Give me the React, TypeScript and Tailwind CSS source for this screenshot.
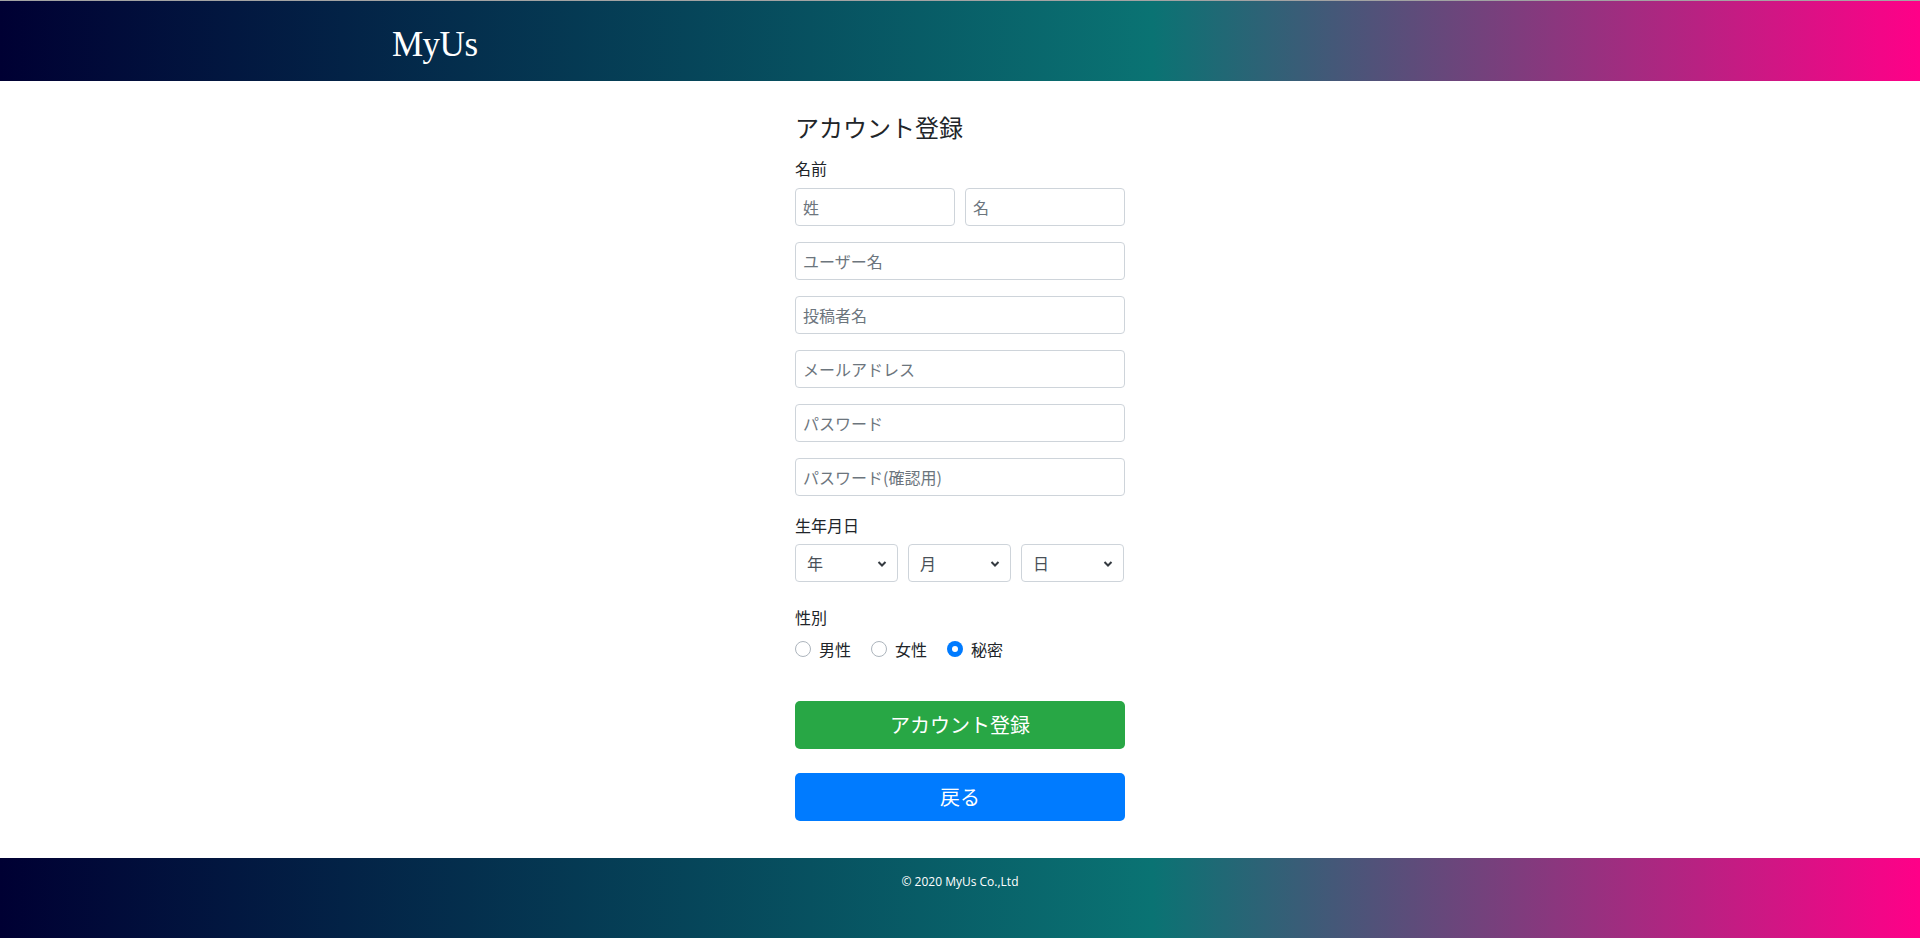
import React, { useState } from 'react';

const jp = { fontFamily: '"Noto Sans CJK JP", "Noto Sans", sans-serif' };
const grad = 'bg-[linear-gradient(to_right,#000033_0%,#0a7373_60%,#ff0088_100%)]';

const inputCls =
    'w-full h-[38px] px-[7px] border border-[#ced4da] rounded-[4px] text-[16px] text-[#495057] placeholder:text-[#6c757d] outline-none bg-white';

const Select: React.FC<{ label: string }> = ({ label }) => (
    <div className="relative w-[103px] h-[38px] border border-[#ced4da] rounded-[4px] bg-white flex items-center pl-[11px] text-[16px] text-[#495057]">
        <span>{label}</span>
        <svg className="absolute right-[10px] top-[15px]" width="10" height="8" viewBox="0 0 10 8">
            <path d="M1.5 2 L5 5.5 L8.5 2" fill="none" stroke="#343a40" strokeWidth="2" />
        </svg>
    </div>
);

const Radio: React.FC<{ label: string; checked: boolean; onClick: () => void }> = ({ label, checked, onClick }) => (
    <label className="flex items-center gap-[8px] mr-[20px] cursor-pointer" onClick={onClick}>
        {checked ? (
            <span className="w-4 h-4 rounded-full bg-[#007bff] flex items-center justify-center">
                <span className="w-[6px] h-[6px] rounded-full bg-white" />
            </span>
        ) : (
            <span className="w-4 h-4 rounded-full border border-[#adb5bd] bg-white" />
        )}
        <span className="text-[16px] leading-6 text-[#212529]">{label}</span>
    </label>
);

export default function App() {
    const [gender, setGender] = useState('secret');

    return (
        <div className="min-h-[938px] flex flex-col bg-white" style={jp}>
            <header className={`h-[81px] border-t border-[#a3a3a3] ${grad}`}>
                <div className="max-w-[1140px] mx-auto pl-[2px] h-full flex items-center">
                    <span className="text-white text-[35px] leading-none pt-[6px] tracking-[-0.5px]" style={{ fontFamily: '"Liberation Serif", serif' }}>
                        MyUs
                    </span>
                </div>
            </header>

            <main className="flex-1 flex justify-center">
                <form className="w-[330px] pt-[31px] pb-[37px]" onSubmit={e => e.preventDefault()}>
                    <h1 className="text-[24px] leading-[29px] text-[#212529] font-normal">アカウント登録</h1>

                    <p className="mt-[15px] text-[16px] leading-6 text-[#212529]">名前</p>
                    <div className="mt-[8px] flex gap-[10px]">
                        <input className={inputCls} placeholder="姓" />
                        <input className={inputCls} placeholder="名" />
                    </div>

                    <div className="mt-4 flex flex-col gap-4">
                        <input className={inputCls} placeholder="ユーザー名" />
                        <input className={inputCls} placeholder="投稿者名" />
                        <input className={inputCls} placeholder="メールアドレス" />
                        <input className={inputCls} type="password" placeholder="パスワード" />
                        <input className={inputCls} type="password" placeholder="パスワード(確認用)" />
                    </div>

                    <p className="mt-[17px] text-[16px] leading-6 text-[#212529]">生年月日</p>
                    <div className="mt-[7px] flex gap-[10px]">
                        <Select label="年" />
                        <Select label="月" />
                        <Select label="日" />
                    </div>

                    <p className="mt-[23px] text-[16px] leading-6 text-[#212529]">性別</p>
                    <div className="mt-[8px] flex">
                        <Radio label="男性" checked={gender === 'male'} onClick={() => setGender('male')} />
                        <Radio label="女性" checked={gender === 'female'} onClick={() => setGender('female')} />
                        <Radio label="秘密" checked={gender === 'secret'} onClick={() => setGender('secret')} />
                    </div>

                    <button className="mt-[40px] w-full h-[48px] rounded-[5px] bg-[#28a745] text-white text-[20px]">
                        アカウント登録
                    </button>
                    <button type="button" className="mt-[24px] w-full h-[48px] rounded-[5px] bg-[#007bff] text-white text-[20px]">
                        戻る
                    </button>
                </form>
            </main>

            <footer className={`h-[80px] ${grad} flex justify-center pt-[15px]`}>
                <p className="text-white text-[12px] leading-[18px]" style={{ fontFamily: '"Open Sans", sans-serif' }}>
                    © 2020 MyUs Co.,Ltd
                </p>
            </footer>
        </div>
    );
}
